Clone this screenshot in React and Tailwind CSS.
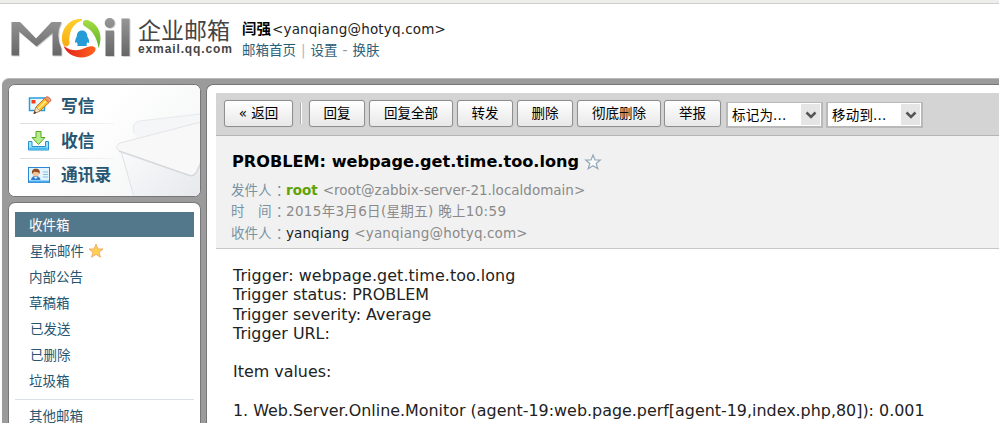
import React from "react";

function Logo() {
  return (
    <svg width="124" height="46" viewBox="0 0 124 46" className="block shrink-0">
      <defs>
        <linearGradient id="steel" gradientUnits="userSpaceOnUse" x1="0" y1="4" x2="0" y2="41">
          <stop offset="0" stopColor="#969696" />
          <stop offset="1" stopColor="#666" />
        </linearGradient>
        <linearGradient id="gold" x1="0" y1="0" x2="0" y2="1">
          <stop offset="0" stopColor="#ffd02d" />
          <stop offset="1" stopColor="#f8ac12" />
        </linearGradient>
        <linearGradient id="leaf" x1="0" y1="0" x2="0" y2="1">
          <stop offset="0" stopColor="#a5dc45" />
          <stop offset="1" stopColor="#5cb22a" />
        </linearGradient>
        <linearGradient id="flame" x1="0" y1="0" x2="1" y2="0">
          <stop offset="0" stopColor="#e3201c" />
          <stop offset="1" stopColor="#ff641f" />
        </linearGradient>
        <filter id="lift" x="-10%" y="-10%" width="120%" height="130%">
          <feDropShadow dx="0.8" dy="0.8" stdDeviation="0.7" floodColor="#777" floodOpacity="0.4" />
        </filter>
      </defs>
      <g filter="url(#lift)">
        <g fill="url(#steel)">
          <path d="M1.500 7H10L26 23.500 41.500 7H51.500Q45 20 51.500 34V40.500H42.500V18L26.500 31.500 9 16.500V40.500H1.500Z" />
          <rect x="95.500" y="15.500" width="8.500" height="25.500" />
          <circle cx="99.700" cy="8" r="5" />
          <rect x="111.500" y="3.500" width="8" height="37.500" />
        </g>
      </g>
      <circle cx="71.500" cy="23.500" r="19.800" fill="white" />
      <path d="M72 4.200C60 3 49.500 14 52.500 28C53.500 32.500 59 32.500 59.500 28C58.500 18 62 9 72 5.500Z" fill="url(#gold)" />
      <path d="M73 7C74 3.500 80 4.500 85 9.500C91 15.500 92 25 88.500 33C87.500 26 84.500 19 79.500 14.500C76 11.500 72 11 73 7Z" fill="url(#leaf)" />
      <path d="M53.500 31C60 35.500 67 36.500 73.500 33.500C78 31 83.500 30 85.500 33C86.500 37 80 42.500 71.500 42.500C63 42.500 56 37.500 53.500 31Z" fill="url(#flame)" />
      <path d="M72 15.500C68.500 15.500 66.800 18 66.800 21.500C65.300 24 64.700 26.500 65.300 28L67 27.300C67 28.500 67.400 29.200 68 29.700C66.500 30.300 67 31 68.500 31H75.500C77.200 31 77.600 30.300 76.200 29.700C76.800 29 77.200 28.300 77.200 27.300L79 28C79.500 26.500 79 24 77.300 21.500C77.300 18 75.500 15.500 72 15.500Z" fill="#259bd7" />
    </svg>
  );
}

function ComposeIcon() {
  return (
    <svg width="24" height="20" viewBox="0 0 24 20">
      <rect x="1.500" y="2" width="15" height="12.500" fill="#e9f8ff" stroke="#279ddc" strokeWidth="1.500" />
      <rect x="3.500" y="4" width="4" height="3.500" fill="#ef401b" />
      <path d="M9 9h3M8 11h2" stroke="#a5cce1" />
      <path d="M6 17.500L8 11 16.500 2.500 21 6.500 12 15Z" fill="#ffc02e" stroke="#b9752b" />
      <path d="M16.500 2.500L18 1Q20 0 22 2.500Q23.500 4 22.500 5L21 6.500Z" fill="#f49a70" stroke="#cb6644" />
      <path d="M10 13L18 5" stroke="#fff087" strokeWidth="1.500" />
      <path d="M6 17.500L8 11 12 15Z" fill="#f5e2bd" stroke="#aa7749" strokeWidth=".6" />
      <path d="M5.500 18L6.500 15 8.500 16.800Z" fill="#493b36" />
    </svg>
  );
}

function InboxIcon() {
  return (
    <svg width="24" height="22" viewBox="0 0 24 22">
      <path d="M0.500 11.500H4V16.500H17.500V11.500H20.500V20H0.500Z" fill="#9fe4fb" stroke="#2892cf" />
      <path d="M1.500 18.500H19.500" stroke="#45b9ed" strokeWidth="2" />
      <path d="M8 1.500H13V7.500H17L10.500 14.500 4 7.500H8Z" fill="#b8ed8b" stroke="#56a62b" />
    </svg>
  );
}

function ContactsIcon() {
  return (
    <svg width="24" height="18" viewBox="0 0 24 18">
      <rect x="0.500" y="1.500" width="21" height="15" fill="#e2f5ff" stroke="#2b87d5" />
      <path d="M1 15.500H21" stroke="#4baaea" strokeWidth="2" />
      <path d="M15 6h5M15 8.500h5M15 11h5" stroke="#8abfe2" />
      <path d="M3 14Q3.500 10 7.500 10Q12 10 12.500 14Z" fill="#2f7ed2" />
      <circle cx="7.800" cy="7.300" r="3.300" fill="#f3c39b" />
      <path d="M4 8C3.500 4 5.500 2.500 8 2.800C11 2.700 12.500 5 11.500 8C10.500 5 7.500 7 6.500 5.500Q5.500 6 4 8Z" fill="#944b22" />
      <path d="M6 11L7.800 13 9.500 11Z" fill="white" />
    </svg>
  );
}

function EnvelopeArt() {
  return (
    <svg width="192" height="112" viewBox="0 0 192 112" className="absolute inset-0">
      <defs>
        <linearGradient id="paper" x1="0" y1="0" x2="1" y2="1">
          <stop offset="0" stopColor="#fff" />
          <stop offset="1" stopColor="#e6e8ec" />
        </linearGradient>
        <linearGradient id="haze" x1="0" y1="0" x2="1" y2=".6">
          <stop offset=".45" stopColor="#fff" />
          <stop offset="1" stopColor="#f4f5f6" />
        </linearGradient>
      </defs>
      <rect width="192" height="112" fill="url(#haze)" />
      <path d="M125 47Q122 38 130 36L192 29V112H150Z" fill="#f5f6f7" />
      <path d="M125 48Q122 38 130 36L192 29" fill="none" stroke="#e8e9eb" />
      <path d="M112 66L192 38V112H125Z" fill="url(#paper)" />
      <path d="M112 66L125 112" stroke="#dfe1e4" fill="none" />
      <path d="M110 66Q105 61 111 58L192 37V73L187 89Q184 92 179 90Z" fill="#f8f8f9" />
      <path d="M110 66L179 90Q184 92 187 88L192 78" fill="none" stroke="#d6d8db" strokeWidth="1.500" />
      <path d="M110 66Q105 61 111 58L192 37" fill="none" stroke="#e4e5e7" />
    </svg>
  );
}

function GoldStar() {
  return (
    <svg width="16" height="16" viewBox="0 0 16 16">
      <path d="M8 1.200L10 6H15L11 9.200 12.500 14.200 8 11.300 3.500 14.200 5 9.200 1 6H6Z" fill="#ffd153" stroke="#f0ae68" strokeLinejoin="round" />
    </svg>
  );
}

function OutlineStar() {
  return (
    <svg width="18" height="18" viewBox="0 0 18 18">
      <path d="M9 2L11 7H16.200L12.200 10.500 13.800 15.700 9 12.700 4.200 15.700 5.800 10.500 1.800 7H7Z" fill="#f8fafb" stroke="#94a7b6" strokeWidth="1.200" />
    </svg>
  );
}

const Primary = ({ icon, label }) => (
  <div className="flex h-[34px] items-center">
    <span className="flex w-[33px]">{icon}</span>
    <b className="text-[16.800px] leading-5">{label}</b>
  </div>
);

const Button = ({ children, className }) => (
  <button className={`h-[27px] shrink-0 whitespace-nowrap rounded-[3px] border border-[#8f8f8f] bg-linear-to-b from-white to-[#e8e8e8] pb-px text-[13.500px] leading-5 shadow-[0_0_1px_#aaa] ${className}`}>
    {children}
  </button>
);

const Select = ({ children }) => (
  <div className="mt-[2px] flex h-[26px] w-[97px] shrink-0 items-center justify-between border-2 border-t border-[#b9b9b9] bg-white pl-[4px] pr-px text-[13.500px] leading-5">
    <span className="whitespace-nowrap tracking-[0.2px]">{children}</span>
    <span className="flex h-[21px] w-[19px] items-center justify-center bg-[#e5e5e5]">
      <svg width="12" height="8" viewBox="0 0 12 8"><path d="M1.500 1.500L6 6 10.500 1.500" fill="none" stroke="#555" strokeWidth="2.500" /></svg>
    </span>
  </div>
);

const Meta = ({ label, children }) => (
  <div className="flex h-[21.500px] items-center whitespace-nowrap text-[#8a8a8a]">
    <span className="flex w-[55px] text-[#7893a3]">
      <span className="w-[42px]">{label}</span>
      <span className="font-['Noto_Sans_CJK_TC',sans-serif]">：</span>
    </span>
    {children}
  </div>
);

const body = [
  "Trigger: webpage.get.time.too.long",
  "Trigger status: PROBLEM",
  "Trigger severity: Average",
  "Trigger URL:",
  "",
  "Item values:",
  "",
  "1. Web.Server.Online.Monitor (agent-19:web.page.perf[agent-19,index.php,80]): 0.001",
];

export default function App() {
  return (
    <div className="flex h-[423px] w-[999px] flex-col overflow-hidden bg-white font-['DejaVu_Sans','Noto_Sans_CJK_SC',sans-serif] text-[13.500px] text-black">
      <div className="h-1 shrink-0 border-b border-[#cfcfcd] bg-[#ededeb]" />
      <header className="flex h-[74px] shrink-0 pl-[10px]">
        <div className="pt-[11px]"><Logo /></div>
        <div className="ml-1 w-[104px] whitespace-nowrap pt-[14px] text-[#444]">
          <div className="h-[25px] text-[23px] font-normal leading-[27px]">企业邮箱</div>
          <div className="font-['Liberation_Sans',sans-serif] text-[12px] font-bold leading-[13px] tracking-[0.880px]">exmail.qq.com</div>
        </div>
        <div className="whitespace-nowrap pt-[14px]">
          <div className="flex h-[22px] leading-[22px]"><b className="w-[30px] text-[14.500px]">闫强</b><span className="tracking-[0.180px] text-[#222]">&lt;yanqiang@hotyq.com&gt;</span></div>
          <div className="flex h-[21px] leading-[21px] text-[#2b6079]">
            <span>邮箱首页</span><span className="mx-[5px] text-[#a9b7c0]">|</span><span>设置</span><span className="mx-[5px] text-[#88939b]">-</span><span>换肤</span>
          </div>
        </div>
      </header>

      <div className="ml-[2px] flex min-h-0 flex-1 rounded-tl-[7px] border-t border-[#bababa] bg-[#9b9b9b] pl-[6px] pt-[5px]">
        <aside className="flex w-[193px] shrink-0 flex-col gap-[5px] text-[#285570]">
          <section className="relative h-[113px] shrink-0 overflow-hidden rounded-[7px] border border-[#777] bg-white">
            <EnvelopeArt />
            <div className="relative pl-[19px] pt-[4px]">
              <Primary icon={<ComposeIcon />} label="写信" />
              <div className="-ml-[8px] h-px w-[94px] bg-linear-to-r from-[#ddd] to-[#f4f4f4]" />
              <Primary icon={<InboxIcon />} label="收信" />
              <div className="-ml-[8px] -mb-px h-px w-[94px] bg-linear-to-r from-[#ddd] to-[#f4f4f4]" />
              <Primary icon={<ContactsIcon />} label="通讯录" />
            </div>
          </section>
          <section className="flex-1 rounded-t-[7px] border border-b-0 border-[#777] bg-white px-[6px] pt-[9px]">
            <div className="flex h-[25px] items-center bg-[#54788b] pl-[14px] pt-px text-white">收件箱</div>
            <nav className="pl-[14px] pt-px">
              <div className="flex h-[26px] items-center gap-[4px] pl-px">星标邮件 <GoldStar /></div>
              <div className="flex h-[26px] items-center">内部公告</div>
              <div className="flex h-[26px] items-center">草稿箱</div>
              <div className="flex h-[26px] items-center pl-px">已发送</div>
              <div className="flex h-[26px] items-center pl-px">已删除</div>
              <div className="flex h-[26px] items-center">垃圾箱</div>
            </nav>
            <div className="mt-[5px] border-t border-[#dce1e8] pl-[14px] pt-[3px]">
              <div className="flex h-[26px] items-center">其他邮箱</div>
            </div>
          </section>
        </aside>

        <main className="ml-[5px] min-w-0 flex-1 rounded-tl-[7px] border-l border-t border-[#777] bg-white pl-[9px] pt-[8px]">
          <div className="flex h-[43px] border-b border-[#b4b4b4] bg-[#d4d4d4] pl-[8px] pt-[7px]">
            <Button className="w-[69px]">« 返回</Button>
            <div className="ml-[7px] mr-[7px] mt-[3px] h-[21px] w-[2px] border-l border-[#aaa] bg-white" />
            <Button className="w-[56px]">回复</Button>
            <Button className="ml-[4px] w-[84px]">回复全部</Button>
            <Button className="ml-[4px] w-[56px]">转发</Button>
            <Button className="ml-[4px] w-[56px]">删除</Button>
            <Button className="ml-[4px] w-[84px]">彻底删除</Button>
            <Button className="ml-[3px] w-[57px]">举报</Button>
            <div className="ml-[5px] flex gap-[3px]"><Select>标记为...</Select><Select>移动到...</Select></div>
          </div>
          <div className="h-[113px] border-b border-[#c7c7c7] bg-[#f1f1f1] pl-[15px] pt-[13px]">
            <div className="flex h-[25px] items-center gap-[5px] whitespace-nowrap pl-px text-[16.140px] font-bold">
              <span className="pt-px">PROBLEM: webpage.get.time.too.long</span><OutlineStar />
            </div>
            <div className="pt-[5px]">
              <Meta label="发件人"><b className="mr-[5px] text-[#5fa207]">root</b>&lt;root@zabbix-server-21.localdomain&gt;</Meta>
              <Meta label={<span className="flex justify-between pr-[1px]"><span>时</span><span>间</span></span>}><span className="tracking-[0.320px]">2015年3月6日(星期五) 晚上10:59</span></Meta>
              <Meta label="收件人"><span className="mr-[5px] text-[#222] tracking-[0.1px]">yanqiang</span><span className="tracking-[0.150px]">&lt;yanqiang@hotyq.com&gt;</span></Meta>
            </div>
          </div>
          <div className="pl-[17px] pt-[17px] text-[15.920px] text-[#222]">
            {body.map((line, i) => <div key={i} className="h-[19.300px] whitespace-nowrap leading-[19.300px] first:tracking-[0.080px]">{line}</div>)}
          </div>
        </main>
      </div>
    </div>
  );
}
